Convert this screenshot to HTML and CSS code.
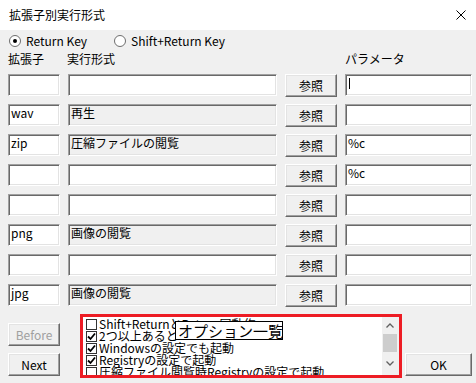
FILE: index.html
```html
<!DOCTYPE html>
<html lang="ja">

<head>
    <meta charset="UTF-8">
    <title>拡張子別実行形式</title>
    <link rel="stylesheet" href="styles.css">
</head>

<body>
    <div class="titlebar">
        <span class="title">拡張子別実行形式</span>
        <svg class="close" width="10" height="10" viewBox="0 0 10 10">
            <path d="M0.5 0.5 L9.5 9.5 M9.5 0.5 L0.5 9.5" stroke="#000" stroke-width="1" fill="none" />
        </svg>
    </div>

    <div class="main">
        <div class="radios">
            <label class="radio">
                <svg width="12" height="12" viewBox="0 0 12 12">
                    <circle cx="6" cy="6" r="5.5" fill="#fff" stroke="#6d6d6d" />
                    <circle cx="6" cy="6" r="2" fill="#000" />
                </svg>
                Return Key
            </label>
            <label class="radio">
                <svg width="12" height="12" viewBox="0 0 12 12">
                    <circle cx="6" cy="6" r="5.5" fill="#fff" stroke="#6d6d6d" />
                </svg>
                Shift+Return Key
            </label>
        </div>

        <div class="heads">
            <span>拡張子</span>
            <span class="head-exec">実行形式</span>
            <span></span>
            <span>パラメータ</span>
        </div>

        <div class="rows">
            <div class="row">
                <div class="edit"></div>
                <div class="edit"></div>
                <button class="btn">参照</button>
                <div class="edit"><span class="caret"></span></div>
            </div>
            <div class="row">
                <div class="edit">wav</div>
                <div class="edit readonly">再生</div>
                <button class="btn">参照</button>
                <div class="edit"></div>
            </div>
            <div class="row">
                <div class="edit">zip</div>
                <div class="edit readonly">圧縮ファイルの閲覧</div>
                <button class="btn">参照</button>
                <div class="edit">%c</div>
            </div>
            <div class="row">
                <div class="edit"></div>
                <div class="edit"></div>
                <button class="btn">参照</button>
                <div class="edit">%c</div>
            </div>
            <div class="row">
                <div class="edit"></div>
                <div class="edit"></div>
                <button class="btn">参照</button>
                <div class="edit"></div>
            </div>
            <div class="row">
                <div class="edit">png</div>
                <div class="edit readonly">画像の閲覧</div>
                <button class="btn">参照</button>
                <div class="edit"></div>
            </div>
            <div class="row">
                <div class="edit"></div>
                <div class="edit"></div>
                <button class="btn">参照</button>
                <div class="edit"></div>
            </div>
            <div class="row">
                <div class="edit">jpg</div>
                <div class="edit readonly">画像の閲覧</div>
                <button class="btn">参照</button>
                <div class="edit"></div>
            </div>
        </div>

        <div class="footer">
            <div class="side">
                <button class="btn disabled">Before</button>
                <button class="btn">Next</button>
            </div>

            <div class="options">
                <ul class="option-list">
                    <li><span class="check"></span>Shift+ReturnとReturn同動作</li>
                    <li><span class="check"><svg width="9" height="9" viewBox="0 0 9 9"><polyline points="1,4.5 3.5,7 8,1.5" fill="none" stroke="#000" stroke-width="1.8" /></svg></span>2つ以上あると</li>
                    <li><span class="check"><svg width="9" height="9" viewBox="0 0 9 9"><polyline points="1,4.5 3.5,7 8,1.5" fill="none" stroke="#000" stroke-width="1.8" /></svg></span>Windowsの設定でも起動</li>
                    <li><span class="check"><svg width="9" height="9" viewBox="0 0 9 9"><polyline points="1,4.5 3.5,7 8,1.5" fill="none" stroke="#000" stroke-width="1.8" /></svg></span>Registryの設定で起動</li>
                    <li><span class="check"></span>圧縮ファイル閲覧時Registryの設定で起動</li>
                </ul>
                <div class="scrollbar">
                    <svg class="arrow-up" width="8" height="5" viewBox="0 0 8 5">
                        <polyline points="0.5,4.5 4,1 7.5,4.5" fill="none" stroke="#606060" stroke-width="1.3" />
                    </svg>
                    <div class="thumb"></div>
                    <svg class="arrow-down" width="8" height="5" viewBox="0 0 8 5">
                        <polyline points="0.5,0.5 4,4 7.5,0.5" fill="none" stroke="#606060" stroke-width="1.3" />
                    </svg>
                </div>
                <div class="tooltip">オプション一覧</div>
            </div>

            <button class="btn ok">OK</button>
        </div>
    </div>
</body>

</html>
```

FILE: styles.css
```css
body {
    margin: 0;
    width: 476px;
    height: 383px;
    overflow: hidden;
    background-color: #f0f0f0;
    font-family: "Noto Sans CJK JP", sans-serif;
    font-size: 12px;
    color: #000;
}

.titlebar {
    height: 30px;
    background-color: #fff;
    display: flex;
    align-items: center;
    justify-content: space-between;
    padding: 0 10px 0 9px;
}

.title {
    line-height: 14px;
}

.main {
    padding: 4px 4px 0 8px;
}

.radios {
    display: flex;
    height: 14px;
    align-items: center;
}

.radio {
    display: flex;
    align-items: center;
    gap: 5px;
    line-height: 14px;
}

.radio:first-child {
    width: 105px;
    margin-left: 1px;
}

.heads,
.row {
    display: grid;
    grid-template-columns: 52px 209px 52px 127px;
    column-gap: 8px;
}

.heads {
    margin-top: 4px;
    height: 14px;
    line-height: 14px;
}

.head-exec {
    margin-left: -1px;
}

.rows {
    margin-top: 8px;
    display: flex;
    flex-direction: column;
    gap: 8px;
}

.row {
    height: 22px;
    align-items: start;
}

.edit {
    height: 22px;
    box-sizing: border-box;
    padding: 0 2px;
    line-height: 15px;
    background-color: #fff;
    border: 1px solid;
    border-color: #a0a0a0 #fff #fff #a0a0a0;
    box-shadow: inset 1px 1px 0 #696969, inset -1px -1px 0 #e3e3e3;
    white-space: nowrap;
    overflow: hidden;
}

.edit.readonly {
    background-color: #f0f0f0;
}

.caret {
    display: inline-block;
    width: 1px;
    height: 11px;
    margin: 3px 0 0 1px;
    background-color: #000;
    vertical-align: top;
}

.btn {
    height: 23px;
    box-sizing: border-box;
    padding: 0;
    margin: 0;
    font-family: inherit;
    font-size: 12px;
    color: #000;
    background-color: #f0f0f0;
    border: 1px solid;
    border-color: #fff #696969 #696969 #fff;
    box-shadow: inset -1px -1px 0 #a0a0a0, inset 1px 1px 0 #e3e3e3;
}

.btn.disabled {
    color: #a0a0a0;
}

.footer {
    margin-top: 8px;
    display: flex;
    align-items: flex-start;
    height: 64px;
}

.side {
    width: 52px;
    margin-top: 9px;
    display: flex;
    flex-direction: column;
    gap: 7px;
}

.options {
    position: relative;
    margin-left: 20px;
    width: 322px;
    height: 64px;
    box-sizing: border-box;
    border: 3px solid #ed1c24;
    background-color: #fff;
    display: flex;
    overflow: hidden;
}

.option-list {
    flex: 1;
    margin: 0;
    padding: 1px 0 0 3px;
    list-style: none;
    overflow: hidden;
}

.option-list li {
    display: flex;
    align-items: center;
    height: 12px;
    line-height: 12px;
    white-space: nowrap;
}

.check {
    width: 11px;
    height: 11px;
    box-sizing: border-box;
    border: 1px solid #333;
    background-color: #fff;
    margin-right: 2px;
    flex-shrink: 0;
    display: flex;
    align-items: center;
    justify-content: center;
}

.scrollbar {
    width: 17px;
    background-color: #f0f0f0;
    position: relative;
}

.arrow-up,
.arrow-down {
    position: absolute;
    left: 4px;
}

.arrow-up {
    top: 6px;
}

.arrow-down {
    bottom: 9px;
}

.thumb {
    position: absolute;
    top: 17px;
    left: 1px;
    width: 14px;
    height: 18px;
    background-color: #cdcdcd;
}

.tooltip {
    position: absolute;
    left: 92px;
    top: 4px;
    width: 108px;
    height: 19px;
    box-sizing: border-box;
    border: 1px solid #000;
    background-color: #fff;
    font-size: 15px;
    line-height: 17px;
    padding-left: 2px;
    white-space: nowrap;
}

.ok {
    width: 67px;
    margin-left: 3px;
    margin-top: 39px;
}
```
